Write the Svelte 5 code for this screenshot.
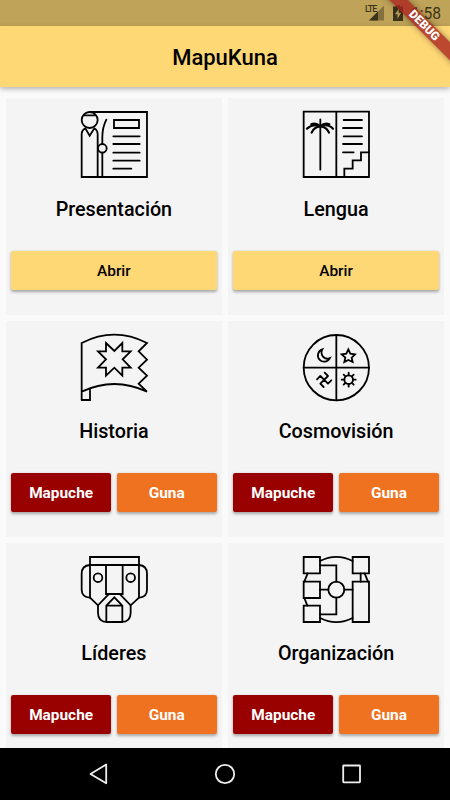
<script>
  const both = [
    { label: 'Mapuche', kind: 'red' },
    { label: 'Guna', kind: 'orange' },
  ];
  const single = [{ label: 'Abrir', kind: 'yellow' }];

  const cards = [
    { title: 'Presentación', icon: 'intro', actions: single },
    { title: 'Lengua', icon: 'language', actions: single },
    { title: 'Historia', icon: 'history', actions: both },
    { title: 'Cosmovisión', icon: 'cosmos', actions: both },
    { title: 'Líderes', icon: 'leaders', actions: both },
    { title: 'Organización', icon: 'organization', actions: both },
  ];
</script>

<div class="screen">
  <div class="status">
    <svg class="signal" viewBox="0 0 20 20">
      <text x="0" y="9">LTE</text>
      <path d="M19 2.5V17.5H4z" fill="#000" opacity=".3" />
      <path d="M13 8.5V17.5H4z" />
    </svg>
    <svg class="battery" viewBox="0 0 10 16">
      <path fill-rule="evenodd" d="M3 0h4v1.6h3V16H0V1.6h3zM5.8 3.5 2 9.3h2.5v4.4L8.2 7.8H5.8z" />
    </svg>
    <span class="clock">1:58</span>
  </div>

  <header><h1>MapuKuna</h1></header>

  <main>
    {#each cards as card}
      <section>
        <svg class="icon" viewBox="0 0 200 200">
          {#if card.icon === 'intro'}
            <circle cx="26" cy="27" r="24" />
            <path d="M9 13H43M26 3H198V198H2V70Q2 57 13 52L26 74L40 52Q50 57 50 70V198" />
            <path d="M76 26Q64 50 64 78V99M64 125V198" />
            <circle cx="64" cy="112" r="13" />
            <path d="M99 27H174V51H99zM97 76H176M97 99H176M97 125H176M97 149H176M97 173H151" />
          {:else if card.icon === 'language'}
            <path d="M2 2H198V198H2zM100 2V198M52 25V176" />
            <path d="M52 45Q38 34 25 40M52 45Q28 38 12 53M52 46Q32 48 26 65M52 45Q66 34 79 40M52 45Q76 38 90 53M52 46Q72 48 78 65" stroke-width="6.5" />
            <path d="M122 27H177M120 51H177M122 76H177M120 99H177M120 124H152" />
            <path d="M124 198V173H149V148H174V124H198" />
          {:else if card.icon === 'history'}
            <path d="M2 198V27Q100 -23 198 27L173 52L198 77L173 101L198 125L173 149L198 173Q100 127 2 173M2 198H27V164" />
            <path d="M75 27L100 51L124 27V52H149L125 76L149 101H124V125L100 101L75 125V101H51L75 76L51 52H75z" />
          {:else if card.icon === 'cosmos'}
            <circle cx="100" cy="101" r="98" />
            <path d="M100 3V199M2 101H198" />
            <path d="M58 46A19 19 0 1 0 81 72Q68 78 60 68Q52 57 58 46z" />
            <path d="M136 46L142 59L156 61L146 71L149 84L136 78L124 84L127 71L116 61L130 59z" />
            <path d="M52 126L75 149M75 126L52 149M75 126L65 116M75 149L85 139M52 149L62 159M52 126L42 136" />
            <circle cx="137" cy="137" r="13" />
            <path d="M137 124V116M137 150V158M124 137H116M150 137H158M128 128L122 122M146 128L152 122M128 146L122 152M146 146L152 152" />
          {:else if card.icon === 'leaders'}
            <path d="M27 3H174V27H27zM27 27V125L51 148L84 114H116L149 148L174 125V27" />
            <path d="M27 27Q2 29 2 53V101Q2 123 27 125M174 27Q198 29 198 53V101Q198 123 174 125" />
            <circle cx="51" cy="65" r="13" />
            <circle cx="149" cy="65" r="13" />
            <path d="M75 27V114H125V27M51 148V170Q51 198 79 198H121Q149 198 149 170V148M76 198V149L100 124L124 149V198M76 149H124M76 198H124" />
          {:else}
            <path d="M2 3H51V52H2zM2 77H51V126H2zM2 149H51V198H2zM149 3H198V52H149zM149 77H198V198H149z" />
            <circle cx="100" cy="101" r="24" />
            <path d="M51 28H100V77M51 101H76M124 101H149M100 125V175H51" />
            <path d="M51 15Q100 -10 149 15M51 186Q100 211 149 186M14 52L4 77M4 126L13 149M173 52V77M185 52L195 77" />
          {/if}
        </svg>
        <h2>{card.title}</h2>
        <div class="actions">
          {#each card.actions as action}
            <button class={action.kind}>{action.label}</button>
          {/each}
        </div>
      </section>
    {/each}
  </main>

  <nav>
    <svg viewBox="0 0 24 24"><path d="M19.2 2.5V21.3L3.5 12z" /></svg>
    <svg viewBox="0 0 24 24"><circle cx="12" cy="12" r="9.2" /></svg>
    <svg viewBox="0 0 24 24"><rect x="3.2" y="3.5" width="16.8" height="16.8" rx=".5" /></svg>
  </nav>

  <div class="banner">DEBUG</div>
</div>

<style>
  :global(body) {
    margin: 0;
  }

  .screen {
    position: relative;
    display: flex;
    flex-direction: column;
    width: 450px;
    height: 800px;
    overflow: hidden;
    background: #fafafa;
    color: #000;
    font-family: Roboto, sans-serif;
  }

  .status {
    display: flex;
    flex: none;
    align-items: center;
    justify-content: flex-end;
    box-sizing: border-box;
    height: 26px;
    padding-right: 9px;
    background: #bfa358;
    color: #3c331b;
  }

  .status svg {
    fill: #3c331b;
  }

  .signal {
    width: 20px;
    height: 20px;
    margin-right: 8px;
  }

  .signal text {
    font-size: 8.8px;
    font-weight: 500;
    letter-spacing: -0.9px;
  }

  .battery {
    width: 10px;
    height: 16px;
    margin-right: 8px;
  }

  .clock {
    padding-top: 2px;
    font-size: 15.6px;
    line-height: 26px;
  }

  header {
    z-index: 1;
    display: flex;
    flex: none;
    align-items: center;
    justify-content: center;
    box-sizing: border-box;
    height: 61.3px;
    padding-top: 2px;
    background: #ffd876;
    box-shadow: 0 2px 5px rgba(0, 0, 0, 0.28);
  }

  h1,
  h2 {
    margin: 0;
    font-weight: 500;
  }

  h1 {
    font-size: 22px;
    line-height: 26px;
  }

  main {
    display: grid;
    flex: 1;
    grid-template-columns: 1fr 1fr;
    grid-auto-rows: 216.67px;
    gap: 5.56px;
    min-height: 0;
    padding: 11px 5.56px 0;
    overflow: hidden;
  }

  section {
    display: flex;
    flex-direction: column;
    align-items: center;
    box-sizing: border-box;
    padding: 13.2px 5.56px 0;
    background: #f4f4f4;
  }

  .icon {
    flex: none;
    width: 66.67px;
    height: 66.67px;
    overflow: visible;
    fill: none;
    stroke: #000;
    stroke-width: 5.4;
    stroke-linecap: round;
    stroke-linejoin: miter;
  }

  h2 {
    margin-top: 18.6px;
    font-size: 19.75px;
    line-height: 26px;
  }

  .actions {
    display: flex;
    align-self: stretch;
    gap: 5.56px;
    margin-top: 28px;
  }

  button {
    flex: 1;
    height: 39px;
    padding: 1px 0 0;
    border: none;
    border-radius: 2.2px;
    box-shadow: 0 1.5px 3px rgba(0, 0, 0, 0.32);
    font: 500 15.4px Roboto, sans-serif;
  }

  .yellow {
    background: #ffd876;
    color: #000;
  }

  .red {
    background: #990000;
    color: #fff;
    font-weight: 700;
  }

  .orange {
    background: #ee7220;
    color: #fff;
    font-weight: 700;
  }

  nav {
    z-index: 1;
    display: flex;
    flex: none;
    align-items: center;
    justify-content: center;
    gap: 102.5px;
    height: 52.5px;
    background: #000;
  }

  nav svg {
    width: 24px;
    height: 24px;
    fill: none;
    stroke: #eee;
    stroke-width: 1.8;
    stroke-linejoin: round;
  }

  /* the clock shows through the translucent ribbon */
  .banner {
    position: absolute;
    z-index: 2;
    top: 19.4px;
    left: 373.9px;
    width: 100px;
    height: 13.4px;
    background: rgba(170, 36, 30, 0.8);
    box-shadow: 0 0 6px rgba(0, 0, 0, 0.4);
    color: #fff;
    font-size: 11.8px;
    font-weight: 900;
    line-height: 13.4px;
    text-align: center;
    transform: rotate(45deg);
  }
</style>
